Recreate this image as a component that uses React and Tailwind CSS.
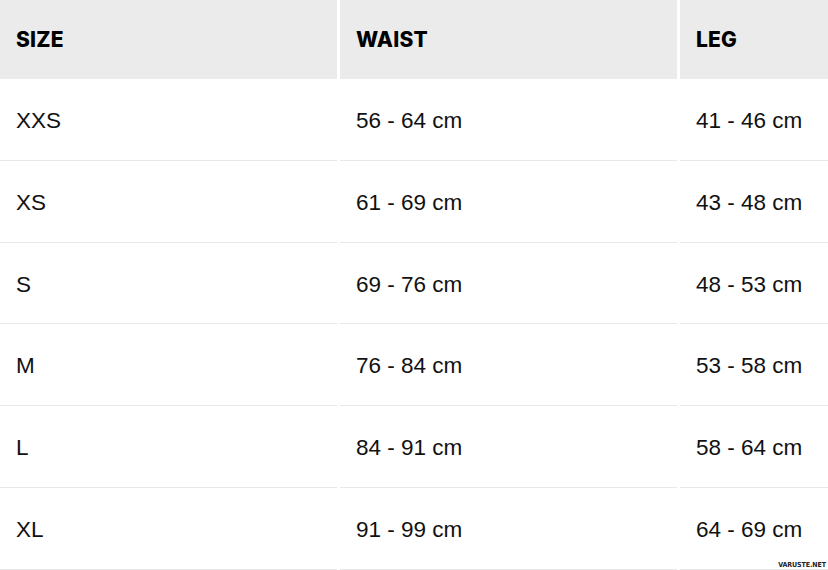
export default function App() {
  const rows = [
    ["XXS", "56 - 64 cm", "41 - 46 cm"],
    ["XS", "61 - 69 cm", "43 - 48 cm"],
    ["S", "69 - 76 cm", "48 - 53 cm"],
    ["M", "76 - 84 cm", "53 - 58 cm"],
    ["L", "84 - 91 cm", "58 - 64 cm"],
    ["XL", "91 - 99 cm", "64 - 69 cm"],
  ];
  return (
    <div className="relative w-[828px] h-[570px] bg-white overflow-hidden text-[#111] font-['Inter','Noto_Sans',sans-serif]">
      <div className="grid grid-cols-[337px_337px_148px] gap-x-[3px]">
        {["SIZE", "WAIST", "LEG"].map((h) => (
          <div key={h} className="h-[79px] bg-[#ebebeb] flex items-center pl-4 pt-[1px] text-[21px] font-extrabold tracking-[0.01em] text-black">
            {h}
          </div>
        ))}
        {rows.map((r, i) =>
          r.map((c, j) => (
            <div key={i + "-" + j} className="h-[81.8px] border-b border-[#e8e8e8] flex items-center pl-4 pt-[3px] text-[22.5px] font-['Liberation_Sans',Arial,sans-serif]">
              {c}
            </div>
          ))
        )}
      </div>
      <div className="absolute right-[2px] bottom-[1px] text-[7px] leading-none font-bold tracking-[-0.01em] text-[#222] font-['DejaVu_Sans_Condensed','DejaVu_Sans',sans-serif]">
        VARUSTE.NET
      </div>
    </div>
  );
}
